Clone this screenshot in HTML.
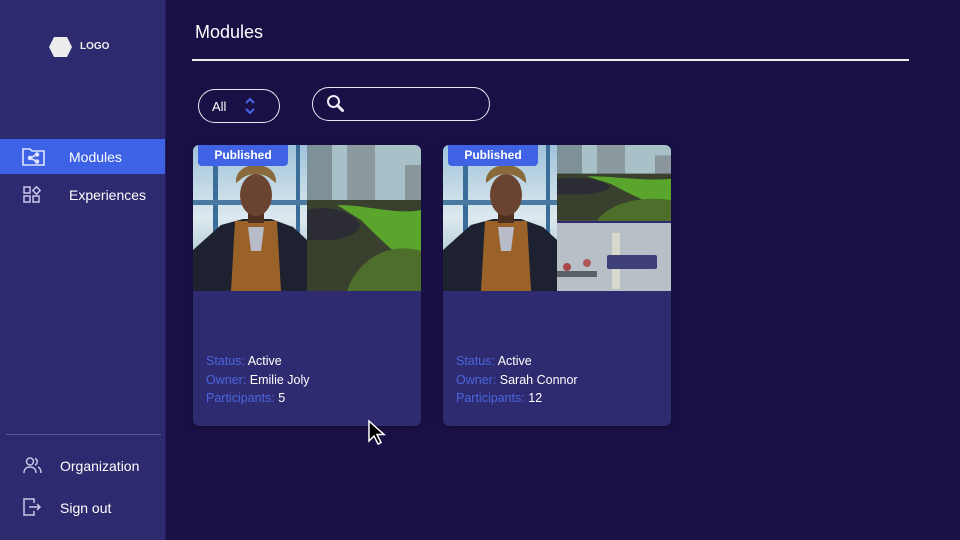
<!DOCTYPE html>
<html><head><meta charset="utf-8"><style>
*{margin:0;padding:0;box-sizing:border-box}
body{width:960px;height:540px;overflow:hidden;background:#191146;font-family:"Liberation Sans",sans-serif;position:relative;color:#fff}
.side{position:absolute;left:0;top:0;width:166px;height:540px;background:#2e2a6f;border-right:1px solid #241e5c}
.abs{position:absolute}
.nav{position:absolute;left:0;width:165px;height:35px;font-size:14px;display:flex;align-items:center}
.nav span{position:absolute;left:69px}
.card{position:absolute;top:145px;width:228px;height:281px;background:#2e2b70;border-radius:6px;overflow:hidden;box-shadow:0 2px 4px rgba(0,0,0,.3)}
.badge{position:absolute;left:5px;top:0;width:90px;height:21px;background:#3f63e4;border-radius:0 0 4px 4px;font-weight:bold;font-size:12px;text-align:center;line-height:21px}
.info{position:absolute;left:13px;top:207px;font-size:12.5px;line-height:18.5px}
.info b{font-weight:normal;color:#4a66dc}
</style></head><body>
<div class="side">
  <svg class="abs" style="left:48px;top:37px" width="25" height="20"><polygon points="6,0 19,0 24,10 19,20 6,20 1,10" fill="#ececec"/></svg>
  <div class="abs" style="left:80px;top:41px;font-size:10px;font-weight:bold;color:#eee">LOGO</div>
  <div class="nav" style="top:139px;background:#3d62e6"><svg class="abs" style="left:22px;top:8px" width="24" height="19" fill="none" stroke="#dfe4ff" stroke-width="1.6"><path d="M1 2h7l2 2h12v14H1z"/><circle cx="8" cy="11" r="1.5" fill="#dfe4ff"/><circle cx="15" cy="7.5" r="1.5" fill="#dfe4ff"/><circle cx="15" cy="14.5" r="1.5" fill="#dfe4ff"/><path d="M8 11l7-3.5M8 11l7 3.5"/></svg><span>Modules</span></div>
  <div class="nav" style="top:177px"><svg class="abs" style="left:23px;top:9px" width="18" height="18" fill="none" stroke="#c8c8e8" stroke-width="1.5"><rect x="1" y="1" width="6" height="6"/><path d="M13.5 0.8l3.7 3.7-3.7 3.7-3.7-3.7z"/><rect x="1" y="10" width="6" height="6"/><rect x="10" y="10" width="6" height="6"/></svg><span>Experiences</span></div>
  <div class="abs" style="left:6px;top:434px;width:155px;height:1px;background:#5a56a0"></div>
  <div class="nav" style="top:448px"><svg class="abs" style="left:23px;top:9px" width="19" height="17" fill="none" stroke="#c8c8e8" stroke-width="1.5"><circle cx="7" cy="4.5" r="3.5"/><path d="M1 16c0-4 2.5-6 6-6s6 2 6 6"/><path d="M12 1.5a3.5 3.5 0 010 6.5M15 10c2 1 3 3 3 6"/></svg><span style="left:60px">Organization</span></div>
  <div class="nav" style="top:490px"><svg class="abs" style="left:23px;top:8px" width="19" height="18" fill="none" stroke="#c8c8e8" stroke-width="1.5"><path d="M11 5V1H1v16h10v-4"/><path d="M6 9h11M14 6l3 3-3 3"/></svg><span style="left:60px">Sign out</span></div>
</div>
<div class="abs" style="left:195px;top:22px;font-size:18px">Modules</div>
<div class="abs" style="left:192px;top:59px;width:717px;height:1.5px;background:#eee"></div>
<div class="abs" style="left:198px;top:89px;width:82px;height:34px;border:1.3px solid #e8e8f0;border-radius:17px"><span class="abs" style="left:13px;top:9px;font-size:13px">All</span><svg class="abs" style="left:45px;top:7px" width="12" height="18" fill="none" stroke="#4a66e6" stroke-width="2"><path d="M2 6l4-4 4 4M2 12l4 4 4-4"/></svg></div>
<div class="abs" style="left:312px;top:87px;width:178px;height:34px;border:1.3px solid #e8e8f0;border-radius:17px"><svg class="abs" style="left:13px;top:6px" width="20" height="20" fill="none" stroke="#ececf4" stroke-width="2"><circle cx="7.5" cy="7.5" r="5.5"/><path d="M11.5 11.5l5 5" stroke-width="3" stroke-linecap="round"/></svg></div>

<svg width="0" height="0" style="position:absolute"><defs>
<linearGradient id="win" x1="0" y1="0" x2="0" y2="1"><stop offset="0" stop-color="#9ec3da"/><stop offset=".5" stop-color="#dde9ef"/><stop offset="1" stop-color="#8fb0c0"/></linearGradient>
<g id="por">
<rect width="114" height="146" fill="url(#win)"/>
<rect x="20" y="0" width="5" height="146" fill="#3b6d9a"/><rect x="103" y="0" width="4" height="146" fill="#3b6d9a"/><rect x="0" y="55" width="114" height="5" fill="#4a7aa2"/>
<path d="M0 105L28 80L50 74L78 74L100 82L114 95V146H0z" fill="#1e2230"/>
<path d="M42 76L84 76L88 146H38z" fill="#9a6228"/>
<path d="M55 82h16l-3 24h-10z" fill="#b8bcc8"/>
<rect x="55" y="60" width="16" height="18" fill="#4e3020"/>
<ellipse cx="63" cy="50" rx="16" ry="21" fill="#6a4430"/>
<path d="M43 38c-2-24 42-24 40 0l-4-3c-8-8-24-8-32 0z" fill="#8a6a3a"/>
</g>
<g id="gar">
<rect width="114" height="146" fill="#a8c0c8"/>
<rect x="0" y="0" width="25" height="60" fill="#7e9098"/><rect x="40" y="0" width="28" height="58" fill="#8c9aa0"/><rect x="98" y="20" width="16" height="40" fill="#8a969c"/>
<path d="M0 55h114v91H0z" fill="#39412e"/>
<path d="M30 60c30 0 60 10 84 5v60c-20-10-40-30-60-50z" fill="#5aa52c"/>
<path d="M0 65c20-5 40 0 50 10s-10 20-30 20H0z" fill="#2c2c34"/>
<path d="M40 146c10-30 40-50 74-40v40z" fill="#4e6e2c"/>
</g>
<g id="lab">
<rect width="114" height="68" fill="#b6c0c6"/>
<rect x="0" y="48" width="40" height="6" fill="#5a6066"/>
<circle cx="10" cy="44" r="4" fill="#a84848"/><circle cx="30" cy="40" r="4" fill="#b05858"/>
<rect x="55" y="10" width="8" height="56" fill="#d8d8cc"/>
<rect x="50" y="32" width="50" height="14" rx="2" fill="#3e3e78"/>
</g>
</defs></svg>

<div class="card" style="left:193px">
  <svg class="abs" style="left:0;top:0" width="228" height="146"><use href="#por"/><g transform="translate(114,0)"><use href="#gar"/></g></svg>
  <div class="badge">Published</div>
  <div class="info"><b>Status:</b> Active<br><b>Owner:</b> Emilie Joly<br><b>Participants:</b> 5</div>
</div>
<div class="card" style="left:443px">
  <svg class="abs" style="left:0;top:0" width="228" height="146"><use href="#por"/><g transform="translate(114,0) scale(1,0.52)"><use href="#gar"/></g><g transform="translate(114,78)"><use href="#lab"/></g></svg>
  <div class="badge">Published</div>
  <div class="info"><b>Status:</b> Active<br><b>Owner:</b> Sarah Connor<br><b>Participants:</b> 12</div>
</div>
<svg class="abs" style="left:367px;top:419px" width="20" height="27"><path d="M2 2v20l5-5 4 8 3-1.5-4-8h7z" fill="#000" stroke="#fff" stroke-width="1.5"/></svg>
</body></html>
